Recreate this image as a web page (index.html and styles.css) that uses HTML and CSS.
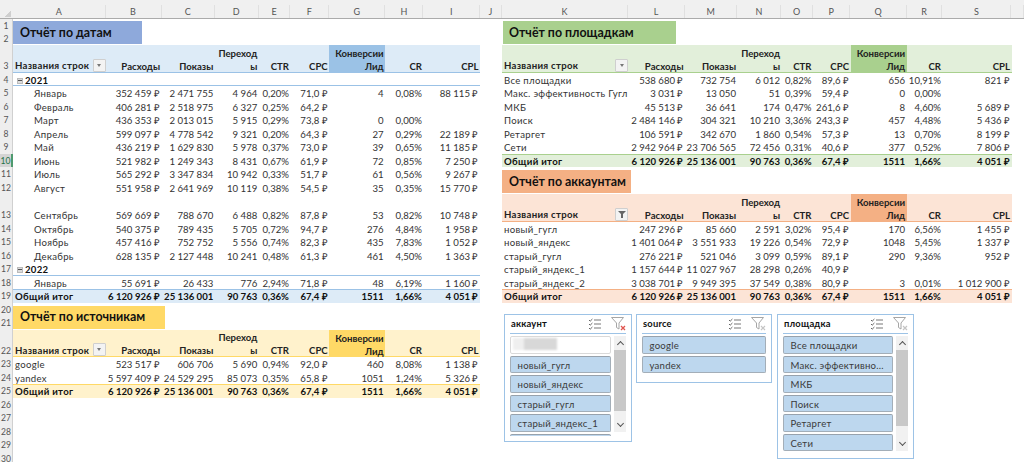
FILE: index.html
```html
<!DOCTYPE html>
<html lang="ru">
<head>
<meta charset="utf-8">
<title>Отчёты</title>
<link rel="stylesheet" href="styles.css">
</head>
<body>
<svg class="defs" aria-hidden="true">
  <symbol id="multi" viewBox="0 0 13 12">
    <path d="M1 2l1.2 1.2L4.4 1M1 6l1.2 1.2L4.4 5M1 10l1.2 1.2L4.4 9" fill="none" stroke="#666" stroke-width="1"/>
    <path d="M6 2h7M6 6h7M6 10h7" stroke="#777" stroke-width="1"/>
  </symbol>
  <symbol id="clear" viewBox="0 0 14 14">
    <path d="M.5 .5h12L8 6v6L5.5 10.500V6z" fill="none" stroke="#a6a6a6" stroke-width="1"/>
  </symbol>
</svg>

<div class="colhead">
  <span class="corner"></span>
  <span class="ca">A</span><span class="cb">B</span><span class="cc">C</span><span class="cd">D</span><span class="ce">E</span><span class="cf">F</span><span class="cg">G</span><span class="ch">H</span><span class="ci">I</span><span class="cj">J</span><span class="ck">K</span><span class="cl">L</span><span class="cm">M</span><span class="cn">N</span><span class="co">O</span><span class="cp">P</span><span class="cq">Q</span><span class="cr">R</span><span class="cs">S</span><span class="ct"></span>
</div>

<div class="sheet">
  <div class="rownums">
    <span>1</span><span>2</span><span class="tallnum">3</span><span>4</span><span>5</span><span>6</span><span>7</span><span>8</span><span>9</span><span class="sel">10</span><span>11</span><span>12</span><span class="tallnum">13</span><span>14</span><span>15</span><span>16</span><span>17</span><span>18</span><span>19</span><span>20</span><span>21</span><span class="tallnum">22</span><span>23</span><span>24</span><span>25</span><span>26</span><span>27</span><span>28</span><span>29</span><span>30</span>
  </div>

  <div class="left">
    <div class="titlewrap"><h2 class="title t-blue">Отчёт по датам</h2></div>
    <div class="pivot blue">
      <div class="row head"><span class="name">Названия строк<i class="drop"><i class="tri"></i></i></span><span>Расходы</span><span>Показы</span><span>Переход<br>ы</span><span>CTR</span><span>CPC</span><span class="hl">Конверсии<br>Лид</span><span>CR</span><span>CPL</span></div>
      <div class="row year"><span class="name"><i class="minus"></i>2021</span></div>
      <div class="row"><span class="name in">Январь</span><span>352 459 ₽</span><span>2 471 755</span><span>4 964</span><span>0,20%</span><span>71,0 ₽</span><span>4</span><span>0,08%</span><span>88 115 ₽</span></div>
      <div class="row"><span class="name in">Февраль</span><span>406 281 ₽</span><span>2 518 975</span><span>6 327</span><span>0,25%</span><span>64,2 ₽</span></div>
      <div class="row"><span class="name in">Март</span><span>436 353 ₽</span><span>2 013 015</span><span>5 915</span><span>0,29%</span><span>73,8 ₽</span><span>0</span><span>0,00%</span></div>
      <div class="row"><span class="name in">Апрель</span><span>599 097 ₽</span><span>4 778 542</span><span>9 321</span><span>0,20%</span><span>64,3 ₽</span><span>27</span><span>0,29%</span><span>22 189 ₽</span></div>
      <div class="row"><span class="name in">Май</span><span>436 219 ₽</span><span>1 629 830</span><span>5 978</span><span>0,37%</span><span>73,0 ₽</span><span>39</span><span>0,65%</span><span>11 185 ₽</span></div>
      <div class="row"><span class="name in">Июнь</span><span>521 982 ₽</span><span>1 249 343</span><span>8 431</span><span>0,67%</span><span>61,9 ₽</span><span>72</span><span>0,85%</span><span>7 250 ₽</span></div>
      <div class="row"><span class="name in">Июль</span><span>565 292 ₽</span><span>3 347 834</span><span>10 942</span><span>0,33%</span><span>51,7 ₽</span><span>61</span><span>0,56%</span><span>9 267 ₽</span></div>
      <div class="row"><span class="name in">Август</span><span>551 958 ₽</span><span>2 641 969</span><span>10 119</span><span>0,38%</span><span>54,5 ₽</span><span>35</span><span>0,35%</span><span>15 770 ₽</span></div>
      <div class="row tall"><span class="name in">Сентябрь</span><span>569 669 ₽</span><span>788 670</span><span>6 488</span><span>0,82%</span><span>87,8 ₽</span><span>53</span><span>0,82%</span><span>10 748 ₽</span></div>
      <div class="row"><span class="name in">Октябрь</span><span>540 375 ₽</span><span>789 435</span><span>5 705</span><span>0,72%</span><span>94,7 ₽</span><span>276</span><span>4,84%</span><span>1 958 ₽</span></div>
      <div class="row"><span class="name in">Ноябрь</span><span>457 416 ₽</span><span>752 752</span><span>5 556</span><span>0,74%</span><span>82,3 ₽</span><span>435</span><span>7,83%</span><span>1 052 ₽</span></div>
      <div class="row"><span class="name in">Декабрь</span><span>628 135 ₽</span><span>2 127 448</span><span>10 241</span><span>0,48%</span><span>61,3 ₽</span><span>461</span><span>4,50%</span><span>1 363 ₽</span></div>
      <div class="row year"><span class="name"><i class="minus"></i>2022</span></div>
      <div class="row"><span class="name in">Январь</span><span>55 691 ₽</span><span>26 433</span><span>776</span><span>2,94%</span><span>71,8 ₽</span><span>48</span><span>6,19%</span><span>1 160 ₽</span></div>
      <div class="row total"><span class="name">Общий итог</span><span>6 120 926 ₽</span><span>25 136 001</span><span>90 763</span><span>0,36%</span><span>67,4 ₽</span><span>1511</span><span>1,66%</span><span>4 051 ₽</span></div>
    </div>
    <div class="titlewrap"><h2 class="title t-yellow">Отчёт по источникам</h2></div>
    <div class="pivot yellow">
      <div class="row head"><span class="name">Названия строк<i class="drop"><i class="tri"></i></i></span><span>Расходы</span><span>Показы</span><span>Переход<br>ы</span><span>CTR</span><span>CPC</span><span class="hl">Конверсии<br>Лид</span><span>CR</span><span>CPL</span></div>
      <div class="row"><span class="name">google</span><span>523 517 ₽</span><span>606 706</span><span>5 690</span><span>0,94%</span><span>92,0 ₽</span><span>460</span><span>8,08%</span><span>1 138 ₽</span></div>
      <div class="row"><span class="name">yandex</span><span>5 597 409 ₽</span><span>24 529 295</span><span>85 073</span><span>0,35%</span><span>65,8 ₽</span><span>1051</span><span>1,24%</span><span>5 326 ₽</span></div>
      <div class="row total"><span class="name">Общий итог</span><span>6 120 926 ₽</span><span>25 136 001</span><span>90 763</span><span>0,36%</span><span>67,4 ₽</span><span>1511</span><span>1,66%</span><span>4 051 ₽</span></div>
    </div>
  </div>

  <div class="right">
    <div class="titlewrap"><h2 class="title t-green">Отчёт по площадкам</h2></div>
    <div class="pivot green">
      <div class="row head"><span class="name">Названия строк<i class="drop"><i class="tri"></i></i></span><span>Расходы</span><span>Показы</span><span>Переход<br>ы</span><span>CTR</span><span>CPC</span><span class="hl">Конверсии<br>Лид</span><span>CR</span><span>CPL</span></div>
      <div class="row"><span class="name">Все площадки</span><span>538 680 ₽</span><span>732 754</span><span>6 012</span><span>0,82%</span><span>89,6 ₽</span><span>656</span><span>10,91%</span><span>821 ₽</span></div>
      <div class="row"><span class="name">Макс. эффективность Гугл</span><span>3 031 ₽</span><span>13 050</span><span>51</span><span>0,39%</span><span>59,4 ₽</span><span>0</span><span>0,00%</span></div>
      <div class="row"><span class="name">МКБ</span><span>45 513 ₽</span><span>36 641</span><span>174</span><span>0,47%</span><span>261,6 ₽</span><span>8</span><span>4,60%</span><span>5 689 ₽</span></div>
      <div class="row"><span class="name">Поиск</span><span>2 484 146 ₽</span><span>304 321</span><span>10 210</span><span>3,36%</span><span>243,3 ₽</span><span>457</span><span>4,48%</span><span>5 436 ₽</span></div>
      <div class="row"><span class="name">Ретаргет</span><span>106 591 ₽</span><span>342 670</span><span>1 860</span><span>0,54%</span><span>57,3 ₽</span><span>13</span><span>0,70%</span><span>8 199 ₽</span></div>
      <div class="row"><span class="name">Сети</span><span>2 942 964 ₽</span><span>23 706 565</span><span>72 456</span><span>0,31%</span><span>40,6 ₽</span><span>377</span><span>0,52%</span><span>7 806 ₽</span></div>
      <div class="row total"><span class="name">Общий итог</span><span>6 120 926 ₽</span><span>25 136 001</span><span>90 763</span><span>0,36%</span><span>67,4 ₽</span><span>1511</span><span>1,66%</span><span>4 051 ₽</span></div>
    </div>
    <div class="titlewrap"><h2 class="title t-orange">Отчёт по аккаунтам</h2></div>
    <div class="pivot orange">
      <div class="row head"><span class="name">Названия строк<i class="drop"><svg class="funnel" viewBox="0 0 8 7"><path d="M0 0h8L5 3v4H3V3z" fill="#666"/></svg></i></span><span>Расходы</span><span>Показы</span><span>Переход<br>ы</span><span>CTR</span><span>CPC</span><span class="hl">Конверсии<br>Лид</span><span>CR</span><span>CPL</span></div>
      <div class="row"><span class="name">новый_гугл</span><span>247 296 ₽</span><span>85 660</span><span>2 591</span><span>3,02%</span><span>95,4 ₽</span><span>170</span><span>6,56%</span><span>1 455 ₽</span></div>
      <div class="row"><span class="name">новый_яндекс</span><span>1 401 064 ₽</span><span>3 551 933</span><span>19 226</span><span>0,54%</span><span>72,9 ₽</span><span>1048</span><span>5,45%</span><span>1 337 ₽</span></div>
      <div class="row"><span class="name">старый_гугл</span><span>276 221 ₽</span><span>521 046</span><span>3 099</span><span>0,59%</span><span>89,1 ₽</span><span>290</span><span>9,36%</span><span>952 ₽</span></div>
      <div class="row"><span class="name">старый_яндекс_1</span><span>1 157 644 ₽</span><span>11 027 967</span><span>28 298</span><span>0,26%</span><span>40,9 ₽</span></div>
      <div class="row"><span class="name">старый_яндекс_2</span><span>3 038 701 ₽</span><span>9 949 395</span><span>37 549</span><span>0,38%</span><span>80,9 ₽</span><span>3</span><span>0,01%</span><span>1 012 900 ₽</span></div>
      <div class="row total"><span class="name">Общий итог</span><span>6 120 926 ₽</span><span>25 136 001</span><span>90 763</span><span>0,36%</span><span>67,4 ₽</span><span>1511</span><span>1,66%</span><span>4 051 ₽</span></div>
    </div>
  </div>
</div>

<section class="slicer s-account">
  <header class="sl-head"><strong>аккаунт</strong><svg class="ic-multi"><use href="#multi"/></svg><span class="ic-clear"><svg><use href="#clear"/></svg><svg class="x" viewBox="0 0 6 6"><path d="M1 1l4 4M5 1L1 5" stroke="#e0554f" stroke-width="1.3"/></svg></span></header>
  <div class="sl-body">
    <ul class="items">
      <li class="blank"><i class="smudge"></i></li>
      <li>новый_гугл</li>
      <li>новый_яндекс</li>
      <li>старый_гугл</li>
      <li>старый_яндекс_1</li>
      <li></li>
    </ul>
    <div class="scroll"><span class="up"></span><span class="thumb"></span><span class="down"></span></div>
  </div>
</section>

<section class="slicer s-source">
  <header class="sl-head"><strong>source</strong><svg class="ic-multi"><use href="#multi"/></svg><span class="ic-clear"><svg><use href="#clear"/></svg><svg class="x" viewBox="0 0 6 6"><path d="M1 1l4 4M5 1L1 5" stroke="#c4c4c4" stroke-width="1.2"/></svg></span></header>
  <div class="sl-body">
    <ul class="items">
      <li>google</li>
      <li>yandex</li>
    </ul>
  </div>
</section>

<section class="slicer s-place">
  <header class="sl-head"><strong>площадка</strong><svg class="ic-multi"><use href="#multi"/></svg><span class="ic-clear"><svg><use href="#clear"/></svg><svg class="x" viewBox="0 0 6 6"><path d="M1 1l4 4M5 1L1 5" stroke="#c4c4c4" stroke-width="1.2"/></svg></span></header>
  <div class="sl-body">
    <ul class="items">
      <li>Все площадки</li>
      <li>Макс. эффективно...</li>
      <li>МКБ</li>
      <li>Поиск</li>
      <li>Ретаргет</li>
      <li>Сети</li>
    </ul>
    <div class="scroll"><span class="up"></span><span class="thumb"></span><span class="down"></span></div>
  </div>
</section>
</body>
</html>
```

FILE: styles.css
```css
* { box-sizing: border-box; }
html, body { margin: 0; padding: 0; }
body {
  position: relative;
  width: 1024px;
  height: 462px;
  overflow: hidden;
  background: #fff;
  color: #333;
  font-family: Lato, "Open Sans", "Liberation Sans", sans-serif;
  font-size: 9.6px;
  line-height: 13.5px;
}
.defs { display: none; }

/* column header strip */
.colhead {
  display: grid;
  grid-template-columns: 13px 92.5px 56px 53.3px 44px 31.7px 38.7px 56px 38.3px 56.5px 22px 126px 57px 52.5px 44px 31.5px 37.5px 56.2px 35.8px 69px 12.500px;
  height: 19px;
  background: #f0f0f0;
  border-bottom: 1px solid #ababab;
  color: #555;
  font-size: 9px;
  text-align: center;
  padding-top: 5px;
}
.colhead span { border-right: 1px solid #e0e0e0; height: 13px; line-height: 13px; }
.colhead .corner { border: 0; background: linear-gradient(135deg, transparent 55%, #cfcfcf 55%); height: 8px; margin: 4px 2px 0 4px; }

/* sheet body */
.sheet { display: flex; }
.rownums { display: flex; flex-direction: column; flex: 0 0 13px; width: 13px; background: #eeeeee; border-right: 1px solid #d0d0d0; color: #555; font-size: 8.6px; text-align: center; }
.rownums span { height: 13.5px; line-height: 13.5px; padding-top: 1px; }
.rownums span:nth-child(-n+2) { height: 13px; line-height: 13px; }
.rownums .tallnum { height: 27.5px; padding-top: 15px; }
.rownums .sel { background: #d4d4d4; color: #217346; margin-right: -1px; border-right: 2px solid #4e9a6e; }

.left { flex: 0 0 467px; width: 467px; }
.right { flex: 0 0 510px; width: 510px; margin-left: 22px; }

.left .row { grid-template-columns: 92.5px 56px 53.3px 44px 31.7px 38.7px 56px 38.3px 56.5px; }
.right .row { grid-template-columns: 126px 57px 52.5px 44px 31.5px 37.5px 56.2px 35.8px 69px; }

.titlewrap { height: 26px; padding-top: 2px; }
.left .pivot + .titlewrap { height: 27px; padding-top: 3px; }
.right .pivot + .titlewrap { height: 27px; padding-top: 3px; }
.title { display: flex; align-items: center; height: 23px; margin: 0; padding-left: 7px; font-size: 12.4px; font-weight: 700; color: #111; white-space: nowrap; }
.t-blue { width: 129px; background: #8ea9db; }
.t-yellow { width: 152px; background: #ffd966; }
.t-green { width: 173px; margin-left: 1px; padding-left: 6px; background: #a9d08e; }
.t-orange { width: 129px; background: #f4b084; }

/* pivot rows */
.row { display: grid; height: 13.5px; white-space: nowrap; }
.row span { text-align: right; padding-right: 1.5px; padding-top: 1px; }
.row .name { text-align: left; padding-left: 2px; padding-right: 0; letter-spacing: .3px; }
.row .in { padding-left: 21px; }
.tall { height: 27.5px; }
.tall span { padding-top: 15px; }

.head { grid-template-rows: 26.5px; height: 27.5px; font-weight: 700; color: #222; background: var(--pale); border-bottom: 1px solid var(--strong); line-height: 13.2px; }
.head span { display: block; padding-top: 0; align-self: end; margin-bottom: -1.5px; }
.head .hl { align-self: stretch; margin-bottom: 0; background: var(--strong); padding-top: 2px; }
.head .name { display: flex; justify-content: space-between; align-items: flex-end; align-self: stretch; height: 27.5px; margin-bottom: 0; }

.year { font-weight: 700; color: #111; border-bottom: 1px solid var(--strong); }
.total { font-weight: 700; color: #111; background: var(--pale); border-top: 1px solid var(--strong); line-height: 13px; }
.total span { padding-top: 0; }

.blue { --pale: #ddebf7; --strong: #9bc2e6; }
.yellow { --pale: #fff2cc; --strong: #ffd966; }
.green { --pale: #e2efda; --strong: #a9d08e; }
.orange { --pale: #fce4d6; --strong: #f4b084; }

.drop { display: flex; align-items: center; justify-content: center; width: 13px; height: 13px; margin-bottom: 1px; background: #f3f3f3; border: 1px solid #cfcfcf; border-radius: 1px; }
.tri { width: 0; height: 0; border: 2.500px solid transparent; border-top: 3px solid #777; border-bottom: 0; }
.funnel { width: 8px; height: 7px; }
.minus { display: inline-block; position: relative; width: 6px; height: 6px; margin: 0 2px 0 2px; background: #dcdcdc; border: 1px solid #bbb; vertical-align: 0; }
.minus::after { content: ""; position: absolute; left: 0; right: 0; top: 1px; height: 1px; background: #555; }

/* slicers, floating above the sheet */
.slicer { position: absolute; top: 314px; background: #fff; border: 1px solid #9dc3e6; padding: 0 5px; color: #333; font-size: 9.6px; }
.s-account { left: 504px; width: 128px; height: 128px; }
.s-source { left: 636px; width: 136px; height: 69px; }
.s-place { left: 777px; width: 137px; height: 145px; }

.sl-head { display: flex; align-items: center; height: 19px; border-bottom: 1px solid #9dc3e6; margin-bottom: 2px; }
.sl-head strong { flex: 1; font-size: 9.4px; color: #111; padding-left: 1px; letter-spacing: .2px; }
.ic-multi { width: 13px; height: 12px; margin-right: 10px; }
.ic-clear { position: relative; display: block; width: 14px; height: 14px; margin-right: 1px; }
.ic-clear svg { width: 14px; height: 14px; display: block; }
.ic-clear .x { position: absolute; right: -1px; bottom: 0; width: 6px; height: 6px; }

.sl-body { display: flex; gap: 3px; overflow: hidden; }
.s-account .sl-body { height: 100px; }
.s-source .sl-body { height: 42px; }
.s-place .sl-body { height: 117px; }
.items { flex: 1; list-style: none; margin: 0; padding: 0; display: flex; flex-direction: column; gap: 2px; min-width: 0; }
.items li { flex: 0 0 17.5px; height: 17.5px; line-height: 17.5px; padding-left: 6.5px; background: #bdd7ee; border: 1px solid #a3aeb8; border-top-color: #98a2ac; border-radius: 2px; color: #3a3a3a; font-size: 9.6px; letter-spacing: .25px; white-space: nowrap; }
.items .blank { position: relative; background: #fff; border-color: #d9d9d9; }
.smudge { position: absolute; left: 2px; top: 1px; width: 44px; height: 12px; background: linear-gradient(90deg, #efefef 0 25%, #d8d8d8 25% 100%); filter: blur(1px); }

.scroll { flex: 0 0 12.5px; display: flex; flex-direction: column; background: #f1f1f1; }
.s-account .scroll { height: 96px; }
.s-place .scroll { height: 115px; }
.scroll span { display: block; }
.thumb { background: #c8c8c8; }
.s-account .thumb { height: 61px; }
.s-place .thumb { height: 76px; }
.s-account .thumb + .down { margin-top: auto; }
.s-place .thumb + .down { margin-top: auto; }
.up, .down { flex: 0 0 14px; height: 14px; position: relative; }
.up::after, .down::after { content: ""; position: absolute; left: 4px; width: 4px; height: 4px; border-left: 1px solid #555; border-top: 1px solid #555; transform: rotate(45deg); top: 6px; }
.down::after { transform: rotate(225deg); top: 3px; }
```
